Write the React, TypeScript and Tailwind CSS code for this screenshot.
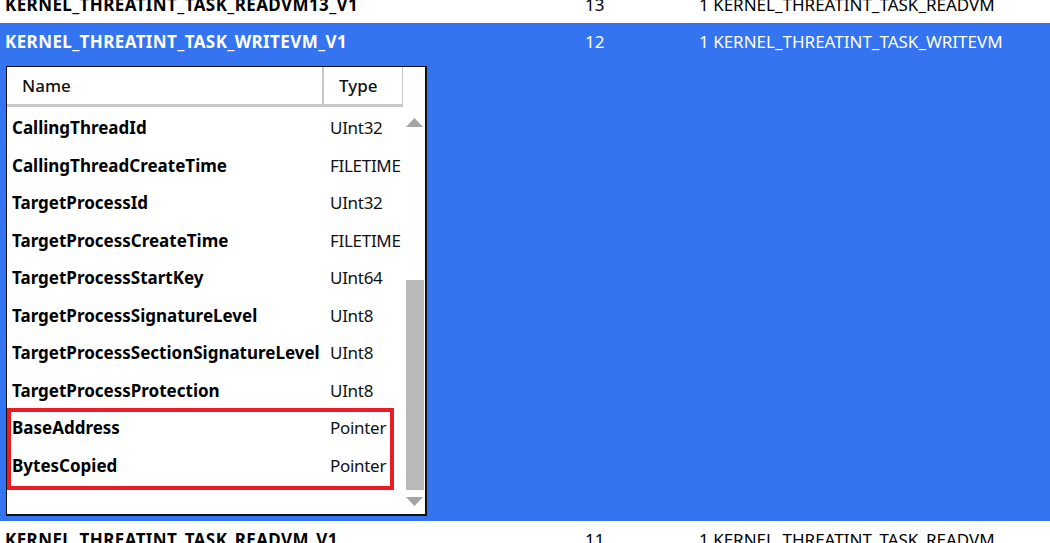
const fields: [string, string][] = [
  ["CallingThreadId", "UInt32"],
  ["CallingThreadCreateTime", "FILETIME"],
  ["TargetProcessId", "UInt32"],
  ["TargetProcessCreateTime", "FILETIME"],
  ["TargetProcessStartKey", "UInt64"],
  ["TargetProcessSignatureLevel", "UInt8"],
  ["TargetProcessSectionSignatureLevel", "UInt8"],
  ["TargetProcessProtection", "UInt8"],
  ["BaseAddress", "Pointer"],
  ["BytesCopied", "Pointer"],
];

function EventRow({ name, id, desc, selected }: { name: string; id: string; desc: string; selected?: boolean }) {
  return (
    <div className={`flex items-center h-[38px] text-[17px] ${selected ? "text-white" : "text-black"}`}>
      <div className="w-[580px] pl-[5px] font-bold tracking-[0.4px] whitespace-nowrap">{name}</div>
      <div className="w-[114px] pl-[5px]">{id}</div>
      <div className="pl-[5px] whitespace-nowrap">{desc}</div>
    </div>
  );
}

export default function App() {
  return (
    <div
      className="w-[1050px] h-[543px] overflow-hidden bg-white"
      style={{ fontFamily: '"Noto Sans", "Open Sans", sans-serif' }}
    >
      {/* Previous row, cut off at top */}
      <div className="h-[23px] overflow-hidden">
        <div className="-mt-[14px]">
          <EventRow name="KERNEL_THREATINT_TASK_READVM13_V1" id="13" desc="1 KERNEL_THREATINT_TASK_READVM" />
        </div>
      </div>

      {/* Selected row with the field list expanded */}
      <div className="h-[498px] bg-[#3574F0]">
        <EventRow name="KERNEL_THREATINT_TASK_WRITEVM_V1" id="12" desc="1 KERNEL_THREATINT_TASK_WRITEVM" selected />

        <div className="ml-[6px] mt-[5px] w-[421px] h-[450px] bg-white border-t border-l border-r-2 border-b-2 border-[#111] flex flex-col relative">
          {/* Header */}
          <div className="flex h-[40px] shrink-0 text-[17px] text-[#111] font-medium">
            <div className="w-[317px] h-full flex items-center pl-[15px] border-r-2 border-b-[3px] border-[#c8c8c8]">Name</div>
            <div className="w-[79px] h-full flex items-center pl-[15px] border-b-[3px] border-r border-[#c8c8c8]">Type</div>
          </div>

          <div className="flex flex-1 min-h-0">
            {/* Rows */}
            <div className="flex-1 pt-[2px] text-[17px] text-black">
              {fields.map(([n, t]) => (
                <div key={n} className="flex items-center h-[37.5px]">
                  <div className="w-[318px] pl-[5px] font-bold whitespace-nowrap">{n}</div>
                  <div className="pl-[5px] text-[#111] tracking-[-0.3px]">{t}</div>
                </div>
              ))}
            </div>

            {/* Scrollbar */}
            <div className="w-[21px] flex flex-col items-center">
              <div className="h-[30px] flex items-center justify-center pt-[1px]">
                <svg width="17" height="9" viewBox="0 0 17 9"><path d="M8.5 0 L17 9 L0 9 Z" fill="#a3a3a3" /></svg>
              </div>
              <div className="h-[143px]" />
              <div className="w-[18px] h-[210px] bg-[#b9b9b9]" />
              <div className="h-[22px] flex items-center justify-center">
                <svg width="17" height="9" viewBox="0 0 17 9"><path d="M0 0 L17 0 L8.5 9 Z" fill="#a3a3a3" /></svg>
              </div>
            </div>
          </div>

          {/* Red highlight annotation */}
          <div className="absolute left-0 top-[341px] w-[387px] h-[82px] border-4 border-[#ED1C24] pointer-events-none" />
        </div>
      </div>

      {/* Next row, cut off at bottom */}
      <EventRow name="KERNEL_THREATINT_TASK_READVM_V1" id="11" desc="1 KERNEL_THREATINT_TASK_READVM" />
    </div>
  );
}
